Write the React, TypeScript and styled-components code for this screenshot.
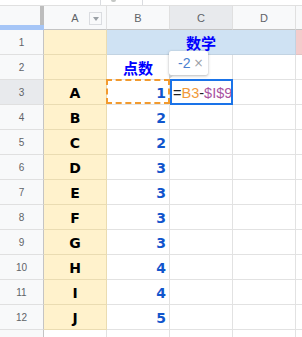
import React from "react";
import styled, { createGlobalStyle } from "styled-components";

const Global = createGlobalStyle`
  html, body { margin: 0; padding: 0; background: #fff; overflow: hidden; }
  body { width: 302px; height: 337px; font-family: "Liberation Sans", Arial, sans-serif; }
`;

const Page = styled.div`
  width: 302px;
  height: 337px;
  overflow: hidden;
  display: flex;
  flex-direction: column;
`;

const TopStrip = styled.div`
  height: 5px;
  flex: none;
  display: flex;
`;

const TopBox = styled.div`
  margin-left: 100px;
  width: 43px;
  height: 5px;
  border-left: 1px solid #dadce0;
  border-right: 1px solid #dadce0;
  display: flex;
  padding-left: 10px;
  box-sizing: border-box;
`;

const TopMark = styled.span`
  width: 5px;
  height: 2px;
  background: #c4c7c5;
  border-radius: 0 0 2px 2px;
`;

const Grid = styled.div`
  display: grid;
  grid-template-columns: 44px 63px 63px 63px 63px 1fr;
  grid-auto-rows: 25px;
`;

const Corner = styled.div`
  box-sizing: border-box;
  border-top: 1px solid #e0e0e0;
  background: #f8f9fa;
  display: grid;
  grid-template-columns: 1fr 4px;
  grid-template-rows: 1fr 5px;
`;

const FreezeV = styled.div`
  grid-column: 2;
  grid-row: 1;
  background: #bdbdbd;
`;

const FreezeH = styled.div`
  grid-column: 1 / span 2;
  grid-row: 2;
  background: #a6c6f7;
`;

const ColHead = styled.div<{ $active?: boolean; $last?: boolean }>`
  box-sizing: border-box;
  border-top: 1px solid #e0e0e0;
  border-bottom: 1px solid #c4c4c4;
  border-right: ${(p) => (p.$last ? "none" : "1px solid #e0e0e0")};
  background: ${(p) => (p.$active ? "#e8eaed" : "#f8f9fa")};
  color: #5f6368;
  font-size: 11px;
  display: grid;
  grid-template-columns: 1fr auto 1fr;
  align-items: center;
  justify-items: center;
`;

const ColLabel = styled.span`
  grid-column: 2;
`;

const FilterBtn = styled.span`
  grid-column: 3;
  justify-self: end;
  margin-right: 4px;
  margin-top: 2px;
  width: 13px;
  height: 13px;
  box-sizing: border-box;
  border: 1px solid #dadce0;
  background: #f8f9fa;
  display: flex;
  align-items: center;
  justify-content: center;
  &::before {
    content: "";
    border-left: 3.5px solid transparent;
    border-right: 3.5px solid transparent;
    border-top: 4px solid #9aa0a6;
  }
`;

const RowHead = styled.div<{ $active?: boolean }>`
  box-sizing: border-box;
  border-right: 1px solid #c4c4c4;
  border-bottom: 1px solid #e0e0e0;
  background: ${(p) => (p.$active ? "#e8eaed" : "#f8f9fa")};
  color: #5f6368;
  font-size: 10px;
  display: flex;
  align-items: center;
  justify-content: center;
`;

type Fill = "white" | "yellow" | "blue" | "pink";

const fills: Record<Fill, { bg: string; line: string }> = {
  white: { bg: "#ffffff", line: "#e2e2e2" },
  yellow: { bg: "#fff2cc", line: "#eadcb2" },
  blue: { bg: "#cfe2f3", line: "#c2d3e2" },
  pink: { bg: "#f4cccc", line: "#e2c2c2" },
};

const Cell = styled.div<{
  $fill?: Fill;
  $span?: number;
  $align?: "left" | "center" | "right";
  $noRight?: boolean;
}>`
  position: relative;
  box-sizing: border-box;
  background: ${(p) => fills[p.$fill || "white"].bg};
  border-bottom: 1px solid ${(p) => fills[p.$fill || "white"].line};
  border-right: ${(p) => (p.$noRight ? "none" : `1px solid ${fills[p.$fill || "white"].line}`)};
  grid-column: span ${(p) => p.$span || 1};
  display: flex;
  align-items: center;
  justify-content: ${(p) =>
    p.$align === "right" ? "flex-end" : p.$align === "left" ? "flex-start" : "center"};
  padding: 0 3px;
  min-width: 0;
`;

const Title = styled.span`
  font-family: "Noto Sans CJK SC", "Noto Sans", sans-serif;
  font-weight: 700;
  font-size: 15px;
  color: #0000ff;
  line-height: 1;
`;

const Letter = styled.span`
  font-family: "DejaVu Sans", Verdana, sans-serif;
  font-weight: 700;
  font-size: 14px;
  color: #000;
  line-height: 1;
  margin-top: 1px;
`;

const Score = styled.span`
  font-family: "DejaVu Sans", Verdana, sans-serif;
  font-weight: 700;
  font-size: 14px;
  color: #1155cc;
  line-height: 1;
  margin-top: 1px;
`;

const CopyCell = styled(Cell)`
  z-index: 1;
  &::after {
    content: "";
    position: absolute;
    top: -1px;
    left: -1px;
    right: -1px;
    bottom: 0;
    border: 2px dashed #f29a2e;
    pointer-events: none;
  }
`;

const ActiveCell = styled(Cell)`
  z-index: 2;
  padding-left: 3px;
  &::after {
    content: "";
    position: absolute;
    top: -1px;
    left: 0;
    right: -1px;
    bottom: -1px;
    border: 2px solid #1a73e8;
    pointer-events: none;
  }
`;

const Formula = styled.span`
  font-family: "Liberation Sans", Arial, sans-serif;
  font-size: 14.5px;
  color: #202124;
  white-space: nowrap;
  margin-top: 1px;
`;

const Ref = styled.span<{ $c: string }>`
  color: ${(p) => p.$c};
`;

const Tooltip = styled.div`
  position: absolute;
  left: -1px;
  bottom: calc(100% + 5px);
  width: 39px;
  height: 24px;
  box-sizing: border-box;
  background: #fff;
  border-radius: 2px;
  box-shadow: 0 1px 3px rgba(60, 64, 67, 0.35), 0 0 1px rgba(60, 64, 67, 0.2);
  display: flex;
  align-items: center;
  gap: 3px;
  padding-left: 9px;
  z-index: 3;
  &::after {
    content: "";
    position: absolute;
    left: 0;
    top: 100%;
    border-right: 5px solid transparent;
    border-top: 4px solid #c9cbcd;
  }
`;

const TipValue = styled.span`
  font-family: "Liberation Sans", Arial, sans-serif;
  font-size: 14px;
  color: #4a7fd0;
`;

const TipClose = styled.span`
  font-family: "DejaVu Sans", sans-serif;
  font-size: 12px;
  color: #9aa0a6;
`;

const rows: [string, number][] = [
  ["A", 1],
  ["B", 2],
  ["C", 2],
  ["D", 3],
  ["E", 3],
  ["F", 3],
  ["G", 3],
  ["H", 4],
  ["I", 4],
  ["J", 5],
];

export default function App() {
  return (
    <Page>
      <Global />
      <TopStrip>
        <TopBox>
          <TopMark />
        </TopBox>
      </TopStrip>
      <Grid>
        <Corner>
          <FreezeV />
          <FreezeH />
        </Corner>
        <ColHead>
          <ColLabel>A</ColLabel>
          <FilterBtn />
        </ColHead>
        <ColHead>
          <ColLabel>B</ColLabel>
        </ColHead>
        <ColHead $active>
          <ColLabel>C</ColLabel>
        </ColHead>
        <ColHead>
          <ColLabel>D</ColLabel>
        </ColHead>
        <ColHead $last />

        <RowHead>1</RowHead>
        <Cell $fill="yellow" />
        <Cell $fill="blue" $span={3}>
          <Title>数学</Title>
        </Cell>
        <Cell $fill="pink" $noRight />

        <RowHead>2</RowHead>
        <Cell $fill="yellow" />
        <Cell>
          <Title>点数</Title>
        </Cell>
        <Cell />
        <Cell />
        <Cell $noRight />

        {rows.map(([name, score], i) => {
          const r = i + 3;
          return (
            <React.Fragment key={name}>
              <RowHead $active={r === 3}>{r}</RowHead>
              <Cell $fill="yellow">
                <Letter>{name}</Letter>
              </Cell>
              {r === 3 ? (
                <CopyCell $align="right">
                  <Score>{score}</Score>
                </CopyCell>
              ) : (
                <Cell $align="right">
                  <Score>{score}</Score>
                </Cell>
              )}
              {r === 3 ? (
                <ActiveCell $align="left">
                  <Tooltip>
                    <TipValue>-2</TipValue>
                    <TipClose>×</TipClose>
                  </Tooltip>
                  <Formula>
                    =<Ref $c="#f19a3a">B3</Ref>-<Ref $c="#a9529f">$I$9</Ref>
                  </Formula>
                </ActiveCell>
              ) : (
                <Cell />
              )}
              <Cell />
              <Cell $noRight />
            </React.Fragment>
          );
        })}

        <RowHead>13</RowHead>
        <Cell />
        <Cell />
        <Cell />
        <Cell />
        <Cell $noRight />
      </Grid>
    </Page>
  );
}
